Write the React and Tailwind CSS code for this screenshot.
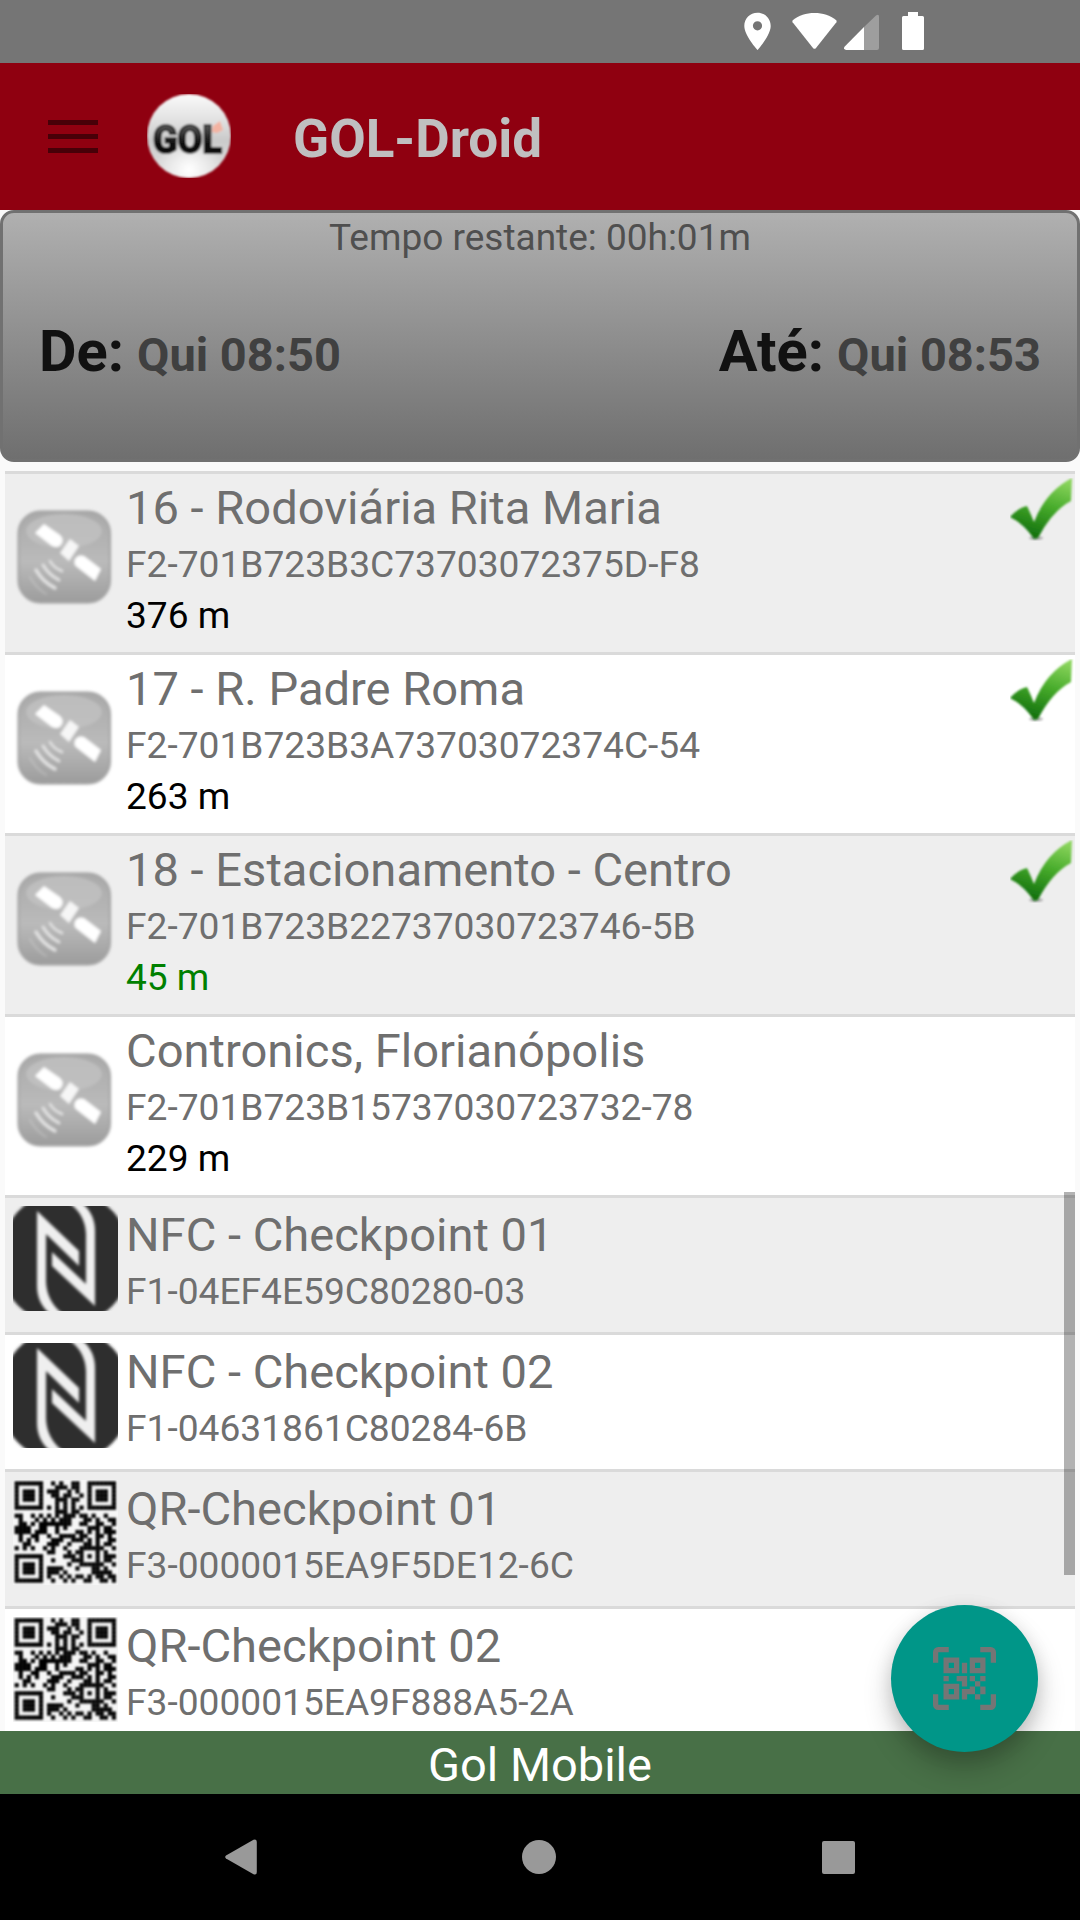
const checkpoints = [
  { type: 'gps', name: '16 - Rodoviária Rita Maria', code: 'F2-701B723B3C73703072375D-F8', distance: '376 m', done: true },
  { type: 'gps', name: '17 - R. Padre Roma', code: 'F2-701B723B3A73703072374C-54', distance: '263 m', done: true },
  { type: 'gps', name: '18 - Estacionamento - Centro', code: 'F2-701B723B22737030723746-5B', distance: '45 m', near: true, done: true },
  { type: 'gps', name: 'Contronics, Florianópolis', code: 'F2-701B723B15737030723732-78', distance: '229 m' },
  { type: 'nfc', name: 'NFC - Checkpoint 01', code: 'F1-04EF4E59C80280-03' },
  { type: 'nfc', name: 'NFC - Checkpoint 02', code: 'F1-04631861C80284-6B' },
  { type: 'qr', name: 'QR-Checkpoint 01', code: 'F3-0000015EA9F5DE12-6C' },
  { type: 'qr', name: 'QR-Checkpoint 02', code: 'F3-0000015EA9F888A5-2A' },
];

const qrRows = [
  '1111111001010011001111111',
  '1000001000111011001000001',
  '1011101011100101001011101',
  '1011101001101100101011101',
  '1011101000111011001011101',
  '1000001000101010001000001',
  '1111111010101010101111111',
  '0000000000111011000000000',
  '1100101010101110110100100',
  '0100010101011100011010011',
  '0110101111111100110011001',
  '1111001100101000001110110',
  '1111011100100001101010111',
  '0100110010011110110011010',
  '0101010001110011101010011',
  '0011000011100100011010110',
  '1010100101001000111111001',
  '0000000011000101100010100',
  '1111111000001110101010111',
  '1000001001000011100010110',
  '1011101000000100111111001',
  '1011101011110001000110100',
  '1011101011101000000111110',
  '1000001010010101101011011',
  '1111111001001010011001101',
];

const GpsIcon = () => (
  <svg viewBox="0 0 105 105" className="w-[105px] h-[105px]">
    <defs>
      <linearGradient id="gpsBg" x1="0" y1="0" x2="0" y2="1">
        <stop offset="0" stopColor="#a9a9a9" />
        <stop offset="0.55" stopColor="#bababa" />
        <stop offset="1" stopColor="#9c9c9c" />
      </linearGradient>
      <filter id="gpsSoft" x="-10%" y="-10%" width="120%" height="120%">
        <feGaussianBlur stdDeviation="1.5" />
      </filter>
    </defs>
    <g filter="url(#gpsSoft)">
      <rect x="5.5" y="7.5" width="91.500" height="91" rx="22" fill="url(#gpsBg)" stroke="#a2a2a2" strokeWidth="2" />
      <ellipse cx="51" cy="27" rx="38" ry="17" fill="#c3c3c3" opacity="0.75" />
      <path d="M31 20 L47 31 Q51 35 49 39 Q46 45 39 42 L22 29 Z" fill="#fff" />
      <path d="M57 35 L66 42 L56 57 L47 49 Z" fill="#f6f6f6" />
      <path d="M88 65 L71 52 Q65 50 62 55 Q60 60 64 63 L82 77 Z" fill="#fff" />
      <g fill="none" stroke="#e4e4e4" strokeLinecap="round">
        <path d="M37 57 Q41 64 49 67" strokeWidth="2.5" />
        <path d="M30 61 Q36 71 46 76" strokeWidth="2.8" />
        <path d="M23 66 Q30 78 42 84" strokeWidth="3.2" />
        <path d="M17 73 Q23 84 33 90" strokeWidth="2" opacity="0.3" />
      </g>
    </g>
  </svg>
);

const NfcIcon = () => (
  <svg viewBox="0 0 105 105" className="w-[105px] h-[105px]">
    <defs>
      <filter id="nfcSoft" x="-10%" y="-10%" width="120%" height="120%">
        <feGaussianBlur stdDeviation="1.4" />
      </filter>
    </defs>
    <path d="M16 -4 H89 Q101 4 109 18 V87 Q101 101 88 109 H17 Q4 101 -4 88 V18 Q4 4 16 -4 Z" fill="#2f2f2f" filter="url(#nfcSoft)" />
    <g fill="#efefef" filter="url(#nfcSoft)">
      <path d="M24 5 L66 45 V60 L33 28 V76 Q34 96 50 108 H37 Q24 97 24 80 Z" />
      <path d="M82 100 L39 60 V46 L73 78 V28 Q72 8 56 -3 H69 Q82 8 82 25 Z" />
    </g>
  </svg>
);

const QrIcon = () => (
  <svg viewBox="0 0 105 105" className="w-[105px] h-[105px]">
    <defs>
      <filter id="qrSoft" x="-5%" y="-5%" width="110%" height="110%">
        <feGaussianBlur stdDeviation="1.1" />
      </filter>
    </defs>
    <rect width="105" height="105" fill="#f6f6f6" />
    <g fill="#000" filter="url(#qrSoft)">
      {qrRows.map((row, y) =>
        row.split('').map((bit, x) =>
          bit === '1' ? <rect key={`${y}-${x}`} x={1.6 + x * 4.05} y={1.3 + y * 4.05} width="4.2" height="4.2" /> : null
        )
      )}
    </g>
  </svg>
);

const CheckIcon = () => (
  <svg viewBox="0 0 64 64" className="absolute right-px top-1 w-[64px] h-[64px]">
    <defs>
      <linearGradient id="checkFill" x1="0.7" y1="0" x2="0.4" y2="1">
        <stop offset="0" stopColor="#8ad45c" />
        <stop offset="0.45" stopColor="#47ab2b" />
        <stop offset="1" stopColor="#0f6d0c" />
      </linearGradient>
      <filter id="checkSoft" x="-10%" y="-10%" width="120%" height="120%">
        <feGaussianBlur stdDeviation="1.1" />
      </filter>
    </defs>
    <ellipse cx="26" cy="60" rx="7" ry="2" fill="#777" opacity="0.5" filter="url(#checkSoft)" />
    <path
      d="M0 39 Q8 30 17 28 Q20 34 24 44 Q36 13 62 0 L61 23 Q42 33 28 60 L24 61 Q14 46 0 39 Z"
      fill="url(#checkFill)"
      filter="url(#checkSoft)"
    />
  </svg>
);

const icons = { gps: GpsIcon, nfc: NfcIcon, qr: QrIcon };

const StatusBar = () => (
  <div className="h-[63px] shrink-0 bg-[#757575] flex items-start justify-end pt-3 pr-[156px]">
    <svg viewBox="0 0 27 38" className="w-[27px] h-[38px] mr-[21px]">
      <path fillRule="evenodd" fill="#fff" d="M13.5 .8 C6 .8 .3 6.5 .3 14 C.3 23.5 13.5 38 13.5 38 S26.700 23.500 26.700 14 C26.700 6.500 21 .8 13.500 .8 Z M13.500 9.200 a4.600 4.600 0 1 1 0 9.200 a4.600 4.600 0 1 1 0 -9.200 Z" />
    </svg>
    <svg viewBox="0 0 45 38" className="w-[45px] h-[38px] mr-[7px]">
      <path fill="#fff" d="M.7 8.200 C7 3.500 14 1 22.500 1 S38 3.500 44.300 8.200 Q45 9 44.400 10.200 L24 36 Q22.500 37.700 21 36 L.6 10.200 Q0 9 .7 8.200 Z" />
    </svg>
    <svg viewBox="0 0 35 38" className="w-[35px] h-[38px] mr-[23px]">
      <path fill="#9e9e9e" d="M20 15 L32 3.400 Q35 1.500 35 4.500 V36 Q35 38 33 38 H20 Z" />
      <path fill="#fff" d="M20 15 V38 H2 Q-1 37.500 .5 34.700 Z" />
    </svg>
    <svg viewBox="0 0 22 38" className="w-[22px] h-[38px]">
      <path fill="#fff" d="M6 0 H16 V4 H20.500 Q22 4 22 5.500 V36.500 Q22 38 20.500 38 H1.500 Q0 38 0 36.500 V5.500 Q0 4 1.500 4 H6 Z" />
    </svg>
  </div>
);

const Header = () => (
  <header className="h-[147px] shrink-0 bg-[#8f0010] flex items-center pl-12 pb-px">
    <div className="flex flex-col gap-[9px] w-[50px]">
      <span className="h-[5px] bg-[#470008]"></span>
      <span className="h-[5px] bg-[#470008]"></span>
      <span className="h-[5px] bg-[#470008]"></span>
    </div>
    <svg viewBox="0 0 84 84" className="w-[84px] h-[84px] ml-[49px]">
      <defs>
        <linearGradient id="ball" x1="0" y1="0" x2="0" y2="1">
          <stop offset="0" stopColor="#fafafa" />
          <stop offset="0.35" stopColor="#dedede" />
          <stop offset="0.55" stopColor="#cacaca" />
          <stop offset="0.72" stopColor="#d4d4d4" />
          <stop offset="1" stopColor="#dedede" />
        </linearGradient>
        <radialGradient id="shine" cx="0.5" cy="0.9" r="0.4">
          <stop offset="0" stopColor="#fff" />
          <stop offset="1" stopColor="#fff" stopOpacity="0" />
        </radialGradient>
        <linearGradient id="golText" x1="0" y1="0" x2="0" y2="1">
          <stop offset="0.2" stopColor="#555" />
          <stop offset="0.6" stopColor="#0a0a0a" />
        </linearGradient>
        <filter id="logoSoft" x="-5%" y="-5%" width="110%" height="110%">
          <feGaussianBlur stdDeviation="1" />
        </filter>
      </defs>
      <g filter="url(#logoSoft)">
        <circle cx="42" cy="42" r="42" fill="url(#ball)" />
        <circle cx="42" cy="42" r="42" fill="url(#shine)" />
        <path d="M65 38 L66 32 L73 27 L76 36 L70 39 Z" fill="#f3b3a2" />
        <text x="6" y="59" textLength="69" lengthAdjust="spacingAndGlyphs" fontFamily="Roboto, sans-serif" fontWeight="900" fontSize="39" fill="url(#golText)" stroke="#111" strokeWidth="1.6">GOL</text>
      </g>
    </svg>
    <h1 className="ml-[62px] text-[53px] leading-[62px] font-bold text-[#c0bfc0] mt-[6px]">GOL-Droid</h1>
  </header>
);

const TimePanel = () => (
  <section className="h-[252px] shrink-0 rounded-[14px] border-[3px] border-[#717171] bg-linear-to-b from-[#b0b0b0] to-[#6f6f6f]">
    <p className="text-center text-[37px] leading-[44px] pt-[3px] text-[#4f4f4f]">Tempo restante: 00h:01m</p>
    <div className="flex items-baseline justify-between px-[36px] mt-[57px] font-bold">
      <p className="flex items-baseline gap-[13px]">
        <span className="text-[57.75px] leading-[68px] text-[#111]">De:</span>
        <span className="text-[47px] text-[#404040]">Qui 08:50</span>
      </p>
      <p className="flex items-baseline gap-[13px]">
        <span className="text-[57.75px] leading-[68px] text-[#111]">Até:</span>
        <span className="text-[47px] text-[#404040]">Qui 08:53</span>
      </p>
    </div>
  </section>
);

const Checkpoint = ({ item, striped }) => {
  const Icon = icons[item.type];
  const gps = item.type === 'gps';

  return (
    <li className={`relative shrink-0 flex items-start border-t-[3px] border-[#dadada] pl-2 ${gps ? 'h-[181px]' : 'h-[137px]'} ${striped ? 'bg-[#eeeeee]' : 'bg-white'}`}>
      <div className={gps ? 'mt-[30px]' : 'mt-2'}>
        <Icon />
      </div>
      <div className={`ml-2 whitespace-nowrap ${gps ? 'pt-1' : 'pt-[7px]'}`}>
        <h2 className="text-[47.1px] leading-[60px] text-[#6f6f6f]">{item.name}</h2>
        <p className="text-[37.15px] leading-[54px] text-[#6f6f6f]">{item.code}</p>
        {item.distance && (
          <p className={`text-[37.1px] leading-[48px] ${item.near ? 'text-[#008000]' : 'text-black'}`}>{item.distance}</p>
        )}
      </div>
      {item.done && <CheckIcon />}
    </li>
  );
};

const ScanButton = () => (
  <button className="absolute right-[42px] -top-[126px] w-[147px] h-[147px] rounded-full bg-[#009688] flex items-center justify-center shadow-[0_16px_28px_rgba(0,0,0,0.22),0_4px_18px_rgba(0,0,0,0.1)]">
    <svg viewBox="0 0 24 24" className="w-[63px] h-[63px]" fill="#757575">
      <path d="M4,4H10V10H4V4M20,4V10H14V4H20M14,15H16V13H14V11H16V13H18V11H20V13H18V15H20V18H18V20H16V18H13V20H11V16H14V15M16,15V18H18V15H16M4,20V14H10V20H4M6,6V8H8V6H6M16,6V8H18V6H16M6,16V18H8V16H6M4,11H6V13H4V11M9,11H13V15H11V13H9V11M11,6H13V10H11V6M2,2V6H0V2A2,2 0 0,1 2,0H6V2H2M22,0A2,2 0 0,1 24,2V6H22V2H18V0H22M2,18V22H6V24H2A2,2 0 0,1 0,22V18H2M22,22V18H24V22A2,2 0 0,1 22,24H18V22H22Z" />
    </svg>
  </button>
);

const NavBar = () => (
  <nav className="h-[126px] shrink-0 bg-black flex items-center justify-between pl-[225px] pr-[225px]">
    <svg viewBox="0 0 32 36" className="w-[32px] h-[36px]">
      <path d="M1 16.500 L28.500 .8 Q31.800 -.5 31.800 3 V33 Q31.800 36.500 28.500 35.200 L1 19.500 Q-.6 18 1 16.500 Z" fill="#999" />
    </svg>
    <span className="w-[34px] h-[34px] rounded-full bg-[#999] mr-px"></span>
    <span className="w-[33px] h-[33px] rounded-[2px] bg-[#999]"></span>
  </nav>
);

const App = () => {
  return (
    <div className="w-[1080px] h-[1920px] overflow-hidden flex flex-col bg-[#fafafa] font-[Roboto,sans-serif]">
      <StatusBar />
      <Header />
      <TimePanel />

      <main className="relative mt-[9px] mx-[5px] flex-1 min-h-0 overflow-hidden">
        <ul className="flex flex-col">
          {checkpoints.map((item, i) => (
            <Checkpoint key={item.code} item={item} striped={i % 2 === 0} />
          ))}
        </ul>
        <div className="absolute right-0 top-[721px] w-[11px] h-[383px] bg-black/30"></div>
      </main>

      <footer className="relative h-[63px] shrink-0 bg-[#487047] text-center">
        <p className="text-[47px] leading-[63px] text-white pt-[2px]">Gol Mobile</p>
        <ScanButton />
      </footer>
      <NavBar />
    </div>
  );
};

export default App;
